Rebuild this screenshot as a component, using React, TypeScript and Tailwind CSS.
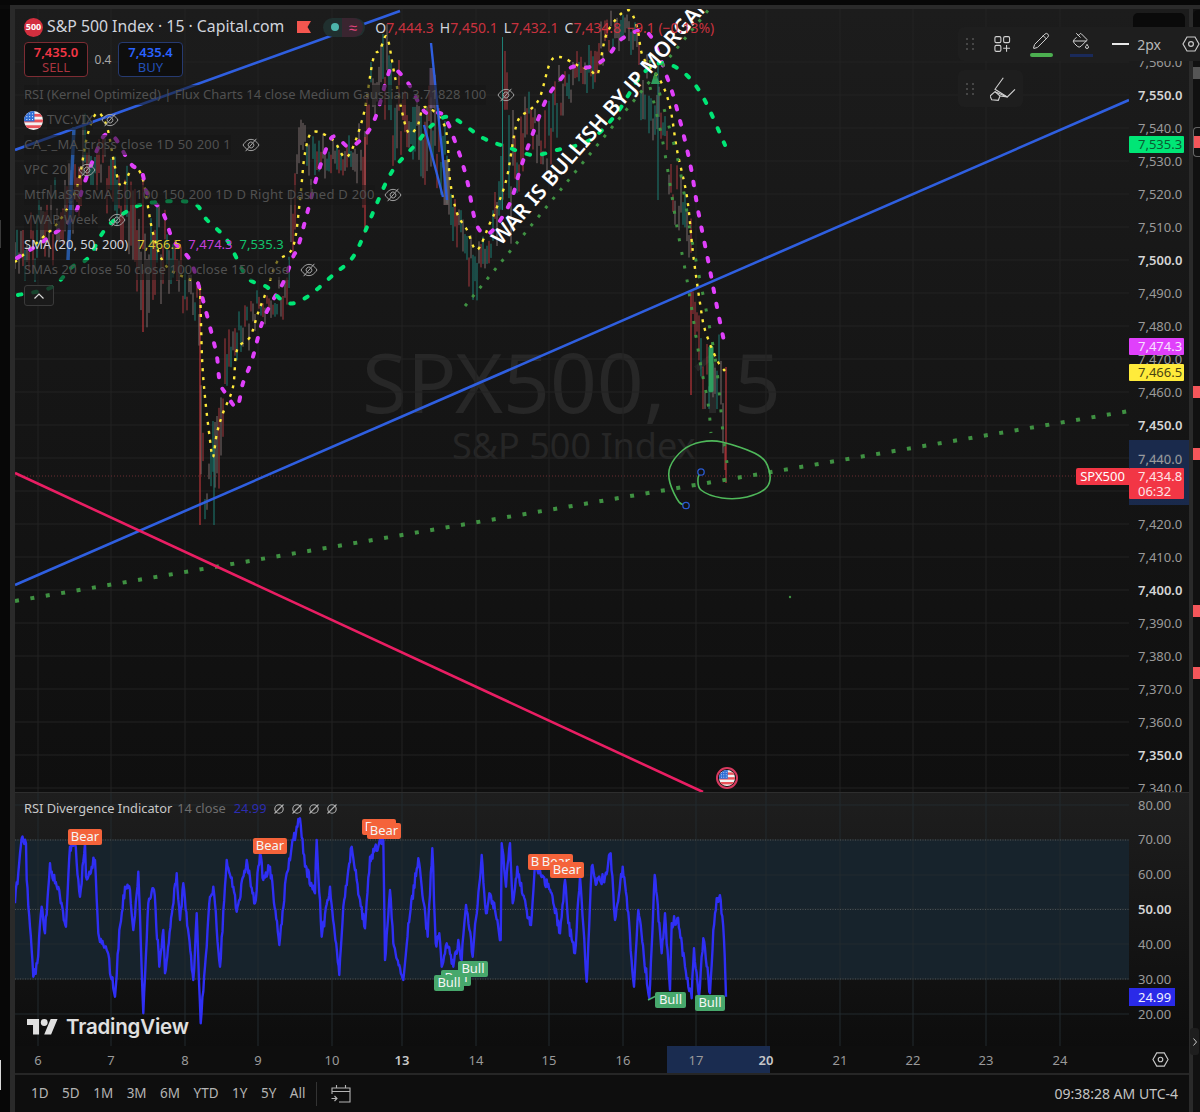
import React, { useId } from 'react';
import { PaintBucket, Pencil } from 'lucide-react';

type Pt = [number, number];

function rng(seed: number) {
  let s = seed;
  return () => {
    s = (s + 0x6d2b79f5) | 0;
    let t = Math.imul(s ^ (s >>> 15), 1 | s);
    t = (t + Math.imul(t ^ (t >>> 7), 61 | t)) ^ t;
    return ((t ^ (t >>> 14)) >>> 0) / 4294967296;
  };
}

function smooth(p: Pt[]) {
  let d = `M${p[0][0]} ${p[0][1]}`;
  for (let i = 0; i < p.length - 1; i++) {
    const a = p[i - 1] || p[i];
    const b = p[i];
    const c = p[i + 1];
    const e = p[i + 2] || c;
    const c1x = b[0] + (c[0] - a[0]) / 6;
    const c1y = b[1] + (c[1] - a[1]) / 6;
    const c2x = c[0] - (e[0] - b[0]) / 6;
    const c2y = c[1] - (e[1] - b[1]) / 6;
    d += `C${c1x.toFixed(1)} ${c1y.toFixed(1)} ${c2x.toFixed(1)} ${c2y.toFixed(1)} ${c[0]} ${c[1]}`;
  }
  return d;
}

// high / low of the candle cloud, read off the picture
const envelope: [number, number, number][] = [
  [15, 225, 290], [30, 210, 300], [40, 195, 285], [60, 170, 260], [85, 100, 210], [95, 110, 190], [110, 130, 220],
  [120, 150, 270], [130, 150, 280], [143, 170, 332], [150, 190, 325], [165, 200, 300], [175, 220, 312], [190, 270, 320],
  [198, 285, 330], [200, 285, 525], [205, 460, 527], [210, 440, 490], [215, 380, 522], [220, 350, 500], [225, 320, 410],
  [230, 300, 370], [240, 310, 360], [248, 300, 360], [252, 300, 340], [260, 280, 322], [265, 295, 330], [275, 290, 320],
  [285, 250, 322], [290, 180, 320], [300, 110, 180], [310, 125, 200], [320, 130, 190], [340, 140, 185], [355, 130, 172],
  [365, 100, 235], [370, 50, 130], [385, 9, 120], [395, 60, 180], [405, 60, 150], [420, 90, 210], [435, 60, 190],
  [445, 110, 205], [450, 150, 240], [455, 190, 270], [465, 220, 290], [475, 210, 305], [480, 240, 300], [490, 220, 262],
  [500, 120, 250], [503, 37, 200], [510, 70, 250], [520, 85, 190], [530, 90, 150], [540, 110, 170], [550, 95, 180],
  [560, 60, 120], [570, 50, 110], [580, 45, 90], [590, 40, 100], [600, 10, 70], [615, 9, 60], [630, 9, 50], [640, 30, 120],
  [650, 60, 140], [655, 80, 150], [665, 90, 140], [670, 140, 210], [680, 150, 240], [690, 200, 280], [695, 260, 350],
  [700, 300, 395], [705, 340, 420], [710, 340, 420], [715, 330, 400], [720, 330, 440], [725, 400, 482],
];

function buildCandles() {
  const r = rng(42);
  const red: string[] = [];
  const teal: string[] = [];
  const grey: string[] = [];
  let j = 0;
  for (let x = 15; x <= 725; x += 2) {
    while (j < envelope.length - 2 && envelope[j + 1][0] < x) j++;
    const a = envelope[j];
    const b = envelope[j + 1];
    const t = Math.min(1, (x - a[0]) / (b[0] - a[0]));
    const top = a[1] + (b[1] - a[1]) * t;
    const bot = a[2] + (b[2] - a[2]) * t;
    const span = bot - top;
    const len = span * (0.2 + r() * 0.35);
    const y1 = top + (span - len) * r();
    const seg = `M${x} ${y1.toFixed(1)}V${(y1 + len).toFixed(1)}`;
    const k = r();
    if (k < 0.36) red.push(seg);
    else if (k < 0.64) teal.push(seg);
    else grey.push(seg);
  }
  return { red: red.join(''), teal: teal.join(''), grey: grey.join('') };
}

const candles = buildCandles();

const sma20: Pt[] = [
  [15, 262], [40, 240], [60, 220], [77, 187], [87, 137], [97, 113], [107, 127], [115, 167], [122, 187], [133, 167], [143, 180],
  [153, 233], [167, 267], [198, 283], [200, 290], [202, 357], [205, 397], [210, 440], [213, 457], [217, 433], [223, 413],
  [233, 387], [237, 350], [250, 337], [258, 313], [267, 290], [277, 262], [293, 247], [300, 200], [305, 153], [313, 132],
  [333, 140], [347, 157], [363, 117], [373, 60], [380, 50], [387, 37], [395, 77], [407, 130], [417, 127], [425, 107],
  [445, 127], [450, 180], [457, 213], [467, 230], [477, 250], [490, 223], [497, 207], [507, 177], [517, 123], [530, 110],
  [540, 97], [550, 63], [560, 57], [577, 65], [590, 70], [598, 73], [607, 33], [627, 10], [637, 27], [643, 57], [660, 80],
  [670, 107], [677, 150], [687, 197], [693, 253], [700, 303], [705, 330], [717, 360], [725, 371],
];
const sma50: Pt[] = [
  [17, 258], [45, 240], [73, 217], [83, 187], [97, 150], [105, 135], [115, 138], [130, 163], [142, 173], [147, 193], [163, 213],
  [173, 240], [190, 260], [200, 290], [203, 300], [212, 335], [217, 357], [220, 383], [227, 395], [237, 407], [243, 383],
  [252, 360], [262, 323], [272, 302], [283, 283], [293, 257], [298, 247], [308, 210], [318, 173], [330, 140], [338, 138],
  [350, 147], [367, 133], [377, 113], [387, 78], [393, 68], [408, 83], [425, 112], [443, 115], [457, 147], [467, 180],
  [475, 220], [483, 233], [493, 230], [510, 203], [520, 170], [533, 133], [547, 98], [560, 80], [572, 67], [590, 67],
  [607, 57], [623, 38], [648, 33], [667, 77], [678, 113], [690, 163], [698, 210], [708, 260], [717, 307], [725, 346],
];
const sma200: Pt[] = [
  [18, 295], [52, 287], [72, 267], [88, 258], [107, 227], [133, 208], [157, 202], [193, 203], [207, 220], [227, 240], [247, 277],
  [267, 287], [287, 303], [307, 297], [333, 275], [353, 257], [367, 227], [377, 203], [393, 170], [417, 143], [430, 127],
  [450, 117], [483, 138], [507, 147], [533, 155], [557, 150], [590, 140], [617, 113], [640, 77], [660, 63], [683, 72],
  [703, 97], [725, 145],
];
const dropLeft: Pt[] = [[650, 87], [663, 143], [677, 227], [687, 280], [695, 330], [701, 367], [708, 403], [711, 433]];
const dropRight: Pt[] = [[650, 60], [670, 130], [680, 170], [690, 230], [700, 280], [712, 340], [718, 380], [723, 433], [727, 463], [729, 473]];
const circlePts: Pt[] = [
  [686, 505], [679, 502], [670, 483], [670, 467], [683, 450], [701, 442], [722, 442], [758, 455], [769, 470], [767, 487],
  [747, 497], [722, 498], [701, 490], [698, 478], [701, 472],
];

const rsiA: Pt[] = [
  [45, 370], [65, 175], [78, 190], [80, 300], [90, 440], [100, 590], [112, 550], [125, 380], [135, 460], [150, 250], [165, 310],
  [180, 350], [198, 440], [210, 200], [225, 190], [240, 350], [255, 190], [258, 290], [285, 240], [295, 460], [320, 510],
  [345, 650], [358, 450], [375, 320], [390, 330], [400, 450], [415, 275], [430, 700], [445, 370], [462, 330], [478, 560],
  [490, 450], [495, 580], [518, 380], [530, 280], [540, 420], [550, 310], [580, 600], [590, 400], [602, 730], [615, 560],
  [630, 350], [640, 320], [660, 560], [680, 240], [700, 320], [710, 395], [740, 240], [765, 370], [780, 220], [790, 300],
  [810, 260], [838, 495], [860, 280], [880, 180], [900, 115], [915, 260], [945, 340], [950, 180], [965, 470], [990, 320],
  [1018, 585], [1030, 380], [1055, 200], [1070, 300], [1095, 445], [1110, 230], [1135, 200], [1150, 180], [1155, 540],
  [1170, 330], [1180, 490], [1198, 555],
];
const rsiB: Pt[] = [
  [10, 600], [25, 430], [55, 235], [65, 320], [83, 470], [97, 205], [107, 490], [118, 460], [125, 560], [140, 490], [160, 560],
  [175, 480], [185, 540], [198, 375], [218, 530], [245, 225], [258, 400], [268, 340], [285, 390], [302, 480], [305, 190],
  [318, 320], [330, 190], [338, 370], [352, 260], [380, 390], [393, 435], [405, 250], [430, 290], [455, 340], [480, 460],
  [495, 300], [505, 430], [525, 520], [540, 290], [560, 605], [575, 260], [590, 310], [615, 290], [632, 220], [645, 420],
  [668, 260], [680, 350], [702, 620], [715, 390], [748, 655], [764, 285], [785, 520], [795, 400], [810, 630], [815, 430],
  [832, 415], [855, 560], [875, 655], [882, 505], [897, 650], [910, 475], [930, 640], [940, 450], [950, 355], [962, 360],
  [972, 480], [978, 650],
];

function buildRsi() {
  const r = rng(7);
  const pts: Pt[] = [
    ...rsiA.map(([x, y]): Pt => [x / 3, 780 + y / 3]),
    ...rsiB.map(([x, y]): Pt => [400 + x / 3, 780 + y / 3]),
  ];
  let d = `M${pts[0][0].toFixed(1)} ${pts[0][1].toFixed(1)}`;
  for (let i = 1; i < pts.length; i++) {
    const [x0, y0] = pts[i - 1];
    const [x1, y1] = pts[i];
    const n = Math.max(1, Math.round((x1 - x0) / 0.8));
    for (let k = 1; k <= n; k++) {
      const t = k / n;
      const jitter = k === n ? 0 : (r() - 0.5) * 11;
      d += `L${(x0 + (x1 - x0) * t).toFixed(1)} ${(y0 + (y1 - y0) * t + jitter).toFixed(1)}`;
    }
  }
  return d;
}

const rsiPath = buildRsi();

const dayX = [38, 111, 185, 258, 332, 402, 476, 549, 623, 696, 766, 840, 913, 986, 1060];
const priceY = Array.from({ length: 23 }, (_, i) => 62 + i * 33);
const rsiY = [805, 840, 875, 909, 944, 979, 1014];

const prices = [
  '7,560.0', '7,550.0', '7,540.0', '7,530.0', '7,520.0', '7,510.0', '7,500.0', '7,490.0', '7,480.0', '7,470.0', '7,460.0', '7,450.0',
  '7,440.0', '7,430.0', '7,420.0', '7,410.0', '7,400.0', '7,390.0', '7,380.0', '7,370.0', '7,360.0', '7,350.0', '7,340.0',
];
const boldPrices = ['7,550.0', '7,500.0', '7,450.0', '7,400.0', '7,350.0'];

const days = [
  { t: '6', w: 'w-[73px]' }, { t: '7', w: 'w-[74px]' }, { t: '8', w: 'w-[73px]' }, { t: '9', w: 'w-[74px]' }, { t: '10', w: 'w-[70px]' },
  { t: '13', w: 'w-[74px]', b: true }, { t: '14', w: 'w-[73px]' }, { t: '15', w: 'w-[74px]' }, { t: '16', w: 'w-[73px]' }, { t: '17', w: 'w-[70px]' },
  { t: '20', w: 'w-[74px]', b: true }, { t: '21', w: 'w-[73px]' }, { t: '22', w: 'w-[73px]' }, { t: '23', w: 'w-[74px]' }, { t: '24', w: 'w-[40px]' },
];

function EyeOff({ className }: { className?: string }) {
  return (
    <svg viewBox="0 0 18 14" className={`w-[18px] h-[14px] shrink-0 ${className || ''}`} fill="none" stroke="#a8a8a8" strokeWidth="1">
      <path d="M1 7C4 2.6 6.5 1.4 9 1.4S14 2.6 17 7C14 11.4 11.5 12.6 9 12.6S4 11.4 1 7Z" />
      <path d="M6.6 8.6A3 3 0 0 1 10.6 4.4M11.4 5.4A3 3 0 0 1 7.4 9.6" />
      <path d="M3.6 13.2 14.4 0.8" />
    </svg>
  );
}

function UsFlag({ size }: { size: string }) {
  const id = useId();
  return (
    <svg viewBox="0 0 20 20" className={`${size} shrink-0`}>
      <clipPath id={id}>
        <circle cx="10" cy="10" r="10" />
      </clipPath>
      <g clipPath={`url(#${id})`}>
        <rect width="20" height="20" fill="#f2f2f2" />
        <rect y="3" width="20" height="3" fill="#e8535a" />
        <rect y="9" width="20" height="3" fill="#e8535a" />
        <rect y="15" width="20" height="3" fill="#e8535a" />
        <rect width="11" height="11" fill="#2f6fd6" />
        <path d="M2.5 3h1M5.5 3h1M8.5 3h1M2.5 6h1M5.5 6h1M8.5 6h1M2.5 9h1M5.5 9h1M8.5 9h1" stroke="#fff" strokeWidth="1" />
      </g>
    </svg>
  );
}

function DragDots() {
  return (
    <div className="grid grid-cols-2 gap-x-[4px] gap-y-[3px]">
      {[0, 1, 2, 3, 4, 5].map((i) => (
        <span key={i} className="w-[2px] h-[2px] rounded-full bg-[#555555]" />
      ))}
    </div>
  );
}

function LegendRow({ text, eye, flag, spacing }: { text: string; eye: string; flag?: boolean; spacing?: string }) {
  return (
    <div className="flex items-center h-[25px]">
      {flag && <UsFlag size="w-[19px] h-[19px] mr-[4px]" />}
      <span className={`bg-[#161616]/55 text-[#505050] whitespace-nowrap ${spacing || ''}`}>{text}</span>
      <EyeOff className={eye} />
    </div>
  );
}

function Tag({ className, children }: { className: string; children: React.ReactNode }) {
  return <div className={`absolute left-0 w-[55px] pl-[9px] rounded-[1px] ${className}`}>{children}</div>;
}

function MainChart() {
  return (
    <svg viewBox="15 9 1114 783" className="block w-full h-full">
      <g stroke="#222222" strokeWidth="1">
        {dayX.map((x) => (
          <line key={x} x1={x} x2={x} y1="9" y2="792" />
        ))}
        {priceY.map((y) => (
          <line key={y} x1="15" x2="1129" y1={y} y2={y} />
        ))}
      </g>
      <path d={candles.teal} stroke="#1d7f74" strokeWidth="1" fill="none" />
      <path d={candles.grey} stroke="#7a6d6d" strokeWidth="1" fill="none" />
      <path d={candles.red} stroke="#a8383e" strokeWidth="1" fill="none" />
      <path d="M200 285V525M365 137V233M143 270V332M691 290V395M726 367V483" stroke="#d93a40" strokeWidth="1" fill="none" />
      <path d="M502.5 37V210M214 445V525M658 60V200" stroke="#1d7f74" strokeWidth="1" fill="none" />
      <path d="M711 348V390" stroke="#2f9f5f" strokeWidth="5" strokeLinecap="round" fill="none" />
      <path d="M432 68V108" stroke="#7d6390" strokeWidth="5" opacity="0.6" fill="none" />
      <path d="M446 160V205" stroke="#7a6a6a" strokeWidth="5" opacity="0.7" fill="none" />
      <path d="M655 72 660 84H651Z" fill="#2f9f5f" />

      <line x1="15" y1="476" x2="1076" y2="476" stroke="#6b2d30" strokeWidth="1" strokeDasharray="1 2" />

      <path d={smooth(sma20)} stroke="#ffeb3b" strokeWidth="2.4" strokeDasharray="3 6" fill="none" />
      <path d={smooth(sma50)} stroke="#e040fb" strokeWidth="4" strokeDasharray="3.5 12" strokeLinecap="round" fill="none" />
      <path d={smooth(sma200)} stroke="#00e676" strokeWidth="4" strokeDasharray="3.5 12" strokeLinecap="round" fill="none" />

      <line x1="465" y1="306" x2="715" y2="2" stroke="#3f9142" strokeWidth="3" strokeDasharray="3 8.5" />
      <path d={smooth(dropLeft)} stroke="#3f9142" strokeWidth="3" strokeDasharray="3 11" fill="none" />
      <path d={smooth(dropRight)} stroke="#3f9142" strokeWidth="3" strokeDasharray="3 14" fill="none" />
      <line x1="15" y1="601" x2="1129" y2="411" stroke="#3f9142" strokeWidth="4" strokeDasharray="4 11.6" />

      <line x1="15" y1="585" x2="1129" y2="100" stroke="#2f5fe0" strokeWidth="2.6" />
      <line x1="15" y1="150" x2="400" y2="11" stroke="#2f5fe0" strokeWidth="2.6" />
      <line x1="431" y1="43" x2="447" y2="200" stroke="#2f5fe0" strokeWidth="2.4" />
      <line x1="424" y1="125" x2="443" y2="197" stroke="#2f5fe0" strokeWidth="2.4" />
      <path d="M74 127 68 260" stroke="#2a62b8" strokeWidth="3.5" opacity="0.85" />
      <line x1="15" y1="473" x2="703" y2="792" stroke="#e91e63" strokeWidth="2.6" />

      <path d={smooth(circlePts)} stroke="#4fb85a" strokeWidth="1.6" fill="none" />
      <circle cx="686" cy="505.5" r="3.2" stroke="#2a5ad0" strokeWidth="1.3" fill="#111111" />
      <circle cx="701" cy="472" r="3.2" stroke="#2a5ad0" strokeWidth="1.3" fill="#111111" />
      <circle cx="790" cy="597" r="1.2" fill="#3f9142" />
    </svg>
  );
}

function RsiChart() {
  return (
    <svg viewBox="15 793 1114 253" className="block w-full h-full">
      <rect x="15" y="840" width="1114" height="139" fill="#17232c" />
      <g stroke="#232a2f" strokeWidth="1">
        {dayX.map((x) => (
          <line key={x} x1={x} x2={x} y1="793" y2="1046" />
        ))}
        {rsiY.map((y) => (
          <line key={y} x1="15" x2="1129" y1={y} y2={y} />
        ))}
      </g>
      <g stroke="#4a5257" strokeWidth="1" strokeDasharray="1 1.5">
        <line x1="15" x2="1129" y1="840" y2="840" />
        <line x1="15" x2="1129" y1="909.5" y2="909.5" />
        <line x1="15" x2="1129" y1="979" y2="979" />
      </g>
      <path d={rsiPath} stroke="#2f2ff5" strokeWidth="2.4" strokeLinejoin="round" fill="none" />
      <path d="M648 1000 656 996" stroke="#4caf72" strokeWidth="1.4" />
    </svg>
  );
}

function Label({ className, children }: { className: string; children: React.ReactNode }) {
  return (
    <div className={`absolute h-[15.5px] rounded-[2px] flex items-center justify-center text-[13px] leading-none text-[#f5f5f5] ${className}`}>
      {children}
    </div>
  );
}

function NoValue() {
  return (
    <svg viewBox="0 0 12 12" className="w-[12px] h-[12px]" fill="none" stroke="#b0b0b0" strokeWidth="1.1">
      <circle cx="6" cy="6" r="4.2" />
      <path d="M1.5 10.5 10.5 1.5" />
    </svg>
  );
}

export default function App() {
  return (
    <div className="relative w-[1200px] h-[1112px] overflow-hidden bg-[#0a0a0a] text-[13px] font-['Noto_Sans','Liberation_Sans',sans-serif]">
      <div className="h-[5px] bg-[#070707]" />
      <div className="h-[4px] ml-[10px] mr-0 bg-[#2a2a2a]" />
      <div className="flex h-[1103px]">
        <div className="w-[10px] bg-[#070707] flex flex-col">
          <div className="h-[211px]" />
          <div className="w-[1px] h-[28px] bg-[#3a3a3a]" />
          <div className="h-[812px]" />
          <div className="w-[1px] h-[30px] bg-[#d8d8d8]" />
        </div>
        <div className="w-[5px] bg-[#2a2a2a]" />

        <div className="w-[1174px] flex flex-col">
          {/* main pane */}
          <div className="flex h-[783px] bg-linear-to-b from-[#1c1c1c] to-[#0f0f0f]">
            <div className="relative w-[1114px] h-full overflow-hidden">
              <div className="absolute left-[347px] top-[327px] text-[82px] leading-[90px] text-[#272727] whitespace-nowrap">SPX500, 15</div>
              <div className="absolute left-[437px] top-[415px] text-[36px] leading-[44px] text-[#262626] whitespace-nowrap">S&amp;P 500 Index</div>
              <div className="absolute inset-0">
                <MainChart />
              </div>

              <div className="absolute left-[480px] top-[218px] origin-left -rotate-[49deg] text-[21px] leading-[28px] font-semibold text-white whitespace-nowrap">
                WAR IS BULLISH BY JP MORGAN
              </div>

              <div className="absolute left-[9px] top-[8px] flex flex-col">
                <div className="flex items-center h-[20px]">
                  <div className="w-[19px] h-[19px] rounded-full bg-[#d32f3f] flex items-center justify-center text-[9px] font-bold text-white">500</div>
                  <span className="ml-[4px] text-[15.8px] text-[#d1d4dc] whitespace-nowrap">S&amp;P 500 Index · 15 · Capital.com</span>
                  <svg viewBox="0 0 14 12" className="ml-[13px] w-[14px] h-[12px]">
                    <path d="M0 0H14L10.5 6 14 12H0Z" fill="#f4564f" />
                  </svg>
                  <div className="ml-[12px] w-[42px] h-[19px] rounded-full bg-[#20302f] flex items-center">
                    <span className="ml-[8px] w-[8px] h-[8px] rounded-full bg-[#4db6ac]" />
                    <span className="ml-[3px] w-[21px] h-[19px] rounded-r-full bg-[#3a2530] text-[#e5457e] text-[15px] leading-[19px] text-center">≈</span>
                  </div>
                  <span className="ml-[10px] text-[14px] text-[#d1d4dc] whitespace-nowrap">
                    O<span className="text-[#c9323f]">7,444.3</span>
                    <span className="ml-[6px]">H</span><span className="text-[#c9323f]">7,450.1</span>
                    <span className="ml-[6px]">L</span><span className="text-[#c9323f]">7,432.1</span>
                    <span className="ml-[6px]">C</span><span className="text-[#c9323f]">7,434.8</span>
                    <span className="ml-[6px] text-[#c9323f]">−9.1 (−0.13%)</span>
                  </span>
                </div>
                <div className="flex items-center mt-[5px] h-[35px]">
                  <div className="w-[64px] h-full rounded-[4px] border border-[#7d2c33] bg-[#0e0e0e] flex flex-col items-center justify-center leading-[15px]">
                    <span className="font-semibold text-[#f23645]">7,435.0</span>
                    <span className="text-[#a9343e]">SELL</span>
                  </div>
                  <span className="w-[30px] text-center text-[12px] text-[#a8a8a8]">0.4</span>
                  <div className="w-[65px] h-full rounded-[4px] border border-[#263a70] bg-[#0e0e0e] flex flex-col items-center justify-center leading-[15px]">
                    <span className="font-semibold text-[#2962ff]">7,435.4</span>
                    <span className="text-[#2350b8]">BUY</span>
                  </div>
                </div>
                <div className="flex flex-col mt-[5.5px]">
                  <LegendRow text="RSI (Kernel Optimized) | Flux Charts 14 close Medium Gaussian 3.71828 100" eye="ml-[11px]" />
                  <LegendRow text="TVC:VIX" eye="ml-[8px]" flag />
                  <LegendRow text="CA_-_MA_cross close 1D 50 200 1" eye="ml-[11px]" spacing="tracking-[0.25px]" />
                  <LegendRow text="VPC 20" eye="ml-[11px]" spacing="tracking-[0.2px]" />
                  <LegendRow text="MtfMaSR SMA 50 100 150 200 1D D Right Dashed D 200" eye="ml-[9px]" spacing="tracking-[0.25px]" />
                  <LegendRow text="VWAP Week" eye="ml-[10px]" spacing="tracking-[0.2px]" />
                  <div className="flex items-center h-[25px] whitespace-nowrap">
                    <span className="text-[#d1d4dc]">SMA (20, 50, 200)</span>
                    <span className="ml-[9px] text-[#d9c836]">7,466.5</span>
                    <span className="ml-[7px] text-[#c53fdc]">7,474.3</span>
                    <span className="ml-[7px] text-[#12c46c]">7,535.3</span>
                  </div>
                  <LegendRow text="SMAs 20 close 50 close 100 close 150 close" eye="ml-[11px]" spacing="tracking-[0.15px]" />
                </div>
                <div className="mt-[2.5px] w-[30px] h-[21px] rounded-[3px] border border-[#3a3a3a] bg-[#1c1c1c]/80 flex items-center justify-center">
                  <svg viewBox="0 0 10 6" className="w-[10px] h-[6px]" fill="none" stroke="#d8d8d8" strokeWidth="1.2">
                    <path d="M0.5 5.5 5 1l4.5 4.5" />
                  </svg>
                </div>
              </div>

              <div className="absolute left-[1061px] top-[459px] w-[53px] h-[17px] rounded-l-[2px] bg-[#f23645] text-[13px] leading-[17px] text-white text-center">SPX500</div>
              <div className="absolute left-[701px] top-[758px]">
                <div className="w-[22px] h-[22px] rounded-full border-2 border-[#d8395f] bg-[#111111] flex items-center justify-center">
                  <UsFlag size="w-[16px] h-[16px]" />
                </div>
              </div>
            </div>

            <div className="relative w-[60px] h-full overflow-hidden">
              <div className="flex flex-col pt-[36.5px]">
                {prices.map((p) => (
                  <div
                    key={p}
                    className={`h-[33px] pl-[9px] leading-[33px] ${boldPrices.includes(p) ? 'font-semibold text-[#d4d4d4]' : 'text-[#9a9a9a]'}`}
                  >
                    {p === '7,430.0' ? '' : p}
                  </div>
                ))}
              </div>
              <Tag className="top-[127px] h-[17px] leading-[17px] bg-[#00e676] text-[#0b5a32]">7,535.3</Tag>
              <Tag className="top-[329px] h-[17px] leading-[17px] bg-[#e040fb] text-[#f8e0ff]">7,474.3</Tag>
              <Tag className="top-[355px] h-[17px] leading-[17px] bg-[#ffeb3b] text-[#4a4410]">7,466.5</Tag>
              <div className="absolute left-0 top-[431px] w-[60px] h-[65px] bg-[#1c2f5a]/80 pt-[11px] pl-[9px] text-[#9a9a9a] leading-[16px]">7,440.0</div>
              <div className="absolute left-0 top-[459px] w-[55px] h-[31px] pl-[9px] rounded-[1px] bg-[#f23645] text-[#ffe3e5] leading-[15px] pt-[1px]">
                <div>7,434.8</div>
                <div>06:32</div>
              </div>
            </div>
          </div>

          <div className="h-[1px] bg-[#2e2e2e]" />

          {/* rsi pane */}
          <div className="flex h-[253px] bg-linear-to-b from-[#1e1e1e] to-[#0d0d0d]">
            <div className="relative w-[1114px] h-full overflow-hidden">
              <div className="absolute inset-0">
                <RsiChart />
              </div>
              <div className="absolute left-[9px] top-[7px] h-[18px] flex items-center whitespace-nowrap text-[12.8px]">
                <span className="text-[#c8c8c8]">RSI Divergence Indicator</span>
                <span className="ml-[5px] text-[#6d6d6d]">14 close</span>
                <span className="ml-[8px] text-[#2c2cb0]">24.99</span>
                <div className="ml-[7px] flex gap-[5.5px]">
                  <NoValue />
                  <NoValue />
                  <NoValue />
                  <NoValue />
                </div>
              </div>

              <Label className="left-[53px] top-[36px] w-[34px] bg-[#f4633a]">Bear</Label>
              <Label className="left-[238px] top-[45px] w-[34px] bg-[#f4633a]">Bear</Label>
              <Label className="left-[347px] top-[26px] w-[34px] bg-[#f4633a]">Bear</Label>
              <Label className="left-[352px] top-[30px] w-[34px] bg-[#f4633a]">Bear</Label>
              <Label className="left-[513px] top-[61px] w-[34px] bg-[#f4633a]">Bear</Label>
              <Label className="left-[524px] top-[61px] w-[34px] bg-[#f4633a]">Bear</Label>
              <Label className="left-[535px] top-[69px] w-[34px] bg-[#f4633a]">Bear</Label>
              <Label className="left-[426px] top-[177px] w-[30px] bg-[#47a86c]">Bull</Label>
              <Label className="left-[419px] top-[182px] w-[30px] bg-[#47a86c]">Bull</Label>
              <Label className="left-[443px] top-[168px] w-[30px] bg-[#47a86c]">Bull</Label>
              <Label className="left-[640px] top-[199px] w-[31px] bg-[#47a86c]">Bull</Label>
              <Label className="left-[680px] top-[202px] w-[30px] bg-[#47a86c]">Bull</Label>

              <div className="absolute left-[12px] top-[221px] flex items-center gap-[8px]">
                <svg viewBox="0 4 36 18" className="w-[31px] h-[15.5px]" fill="#e0e0e0">
                  <path d="M14 22H7V11H0V4h14v18zM28 22h-8l7.5-18h8L28 22z" />
                  <circle cx="20" cy="8" r="4" />
                </svg>
                <span className="text-[20.5px] leading-[26px] font-semibold tracking-[-0.2px] text-[#e0e0e0] font-['Inter','Liberation_Sans',sans-serif]">TradingView</span>
              </div>
            </div>

            <div className="relative w-[60px] h-full overflow-hidden">
              <div className="flex flex-col -mt-[5.4px]">
                {['80.00', '70.00', '60.00', '50.00', '40.00', '30.00', '20.00'].map((v) => (
                  <div key={v} className={`h-[34.83px] pl-[9px] leading-[34.83px] ${v === '50.00' ? 'font-semibold text-[#d4d4d4]' : 'text-[#9a9a9a]'}`}>
                    {v}
                  </div>
                ))}
              </div>
              <div className="absolute left-0 top-[195px] w-[46px] h-[18px] pl-[9px] leading-[18px] bg-[#2a2ae8] text-[#f0f0ff]">24.99</div>
            </div>
          </div>

          {/* time axis */}
          <div className="flex h-[27px] bg-[#0e0e0e]">
            <div className="relative w-[1114px] flex pl-[23px] items-center">
              <div className="absolute left-[652px] top-0 w-[103px] h-[27px] bg-[#1a2c50]" />
              {days.map((d) => (
                <div key={d.t} className={`relative ${d.w} h-[27px] leading-[29px]`}>
                  <span className={`absolute left-0 -translate-x-1/2 ${d.b ? 'font-semibold text-[#c8c8c8]' : 'text-[#9a9a9a]'}`}>{d.t}</span>
                </div>
              ))}
            </div>
            <div className="w-[60px] flex items-center justify-center pl-[2px]">
              <svg viewBox="0 0 18 18" className="w-[17px] h-[17px]" fill="none" stroke="#c8c8c8" strokeWidth="1.2">
                <path d="M5 2H13L17 9 13 16H5L1 9Z" />
                <circle cx="9" cy="9" r="2.4" />
              </svg>
            </div>
          </div>

          <div className="h-[2px] bg-[#262626]" />

          {/* bottom bar */}
          <div className="flex items-center h-[37px] bg-[#0e0e0e] pl-[16px] text-[13.5px] text-[#b4b4b4]">
            <div className="flex items-center gap-[13.5px]">
              <span>1D</span>
              <span>5D</span>
              <span>1M</span>
              <span>3M</span>
              <span>6M</span>
              <span>YTD</span>
              <span>1Y</span>
              <span>5Y</span>
              <span>All</span>
            </div>
            <div className="ml-[11px] w-[1px] h-[24px] bg-[#333333]" />
            <svg viewBox="0 0 20 19" className="ml-[14px] w-[20px] h-[19px]" fill="none" stroke="#b4b4b4" strokeWidth="1.1">
              <path d="M1 10V4H19V18H8M1 7.5H19M5.5 1V4.5M14.5 1V4.5" />
              <path d="M0.5 14.5H6M3.5 12 6 14.5 3.5 17" />
            </svg>
            <span className="ml-auto mr-[11px] text-[14px] text-[#c4c4c4] whitespace-nowrap">09:38:28 AM UTC-4</span>
          </div>
        </div>

        <div className="w-[4px] bg-[#2a2a2a]" />
        <div className="w-[7px] bg-[#111111] flex flex-col">
          <div className="h-[58px]" />
          <div className="h-[12px] bg-[#555555]" />
          <div className="h-[48px]" />
          <div className="h-[30px] border border-r-0 border-[#666666] rounded-l-[4px] flex items-center">
            <div className="w-full h-[12px] bg-[#f4565a]" />
          </div>
          <div className="h-[229px]" />
          <div className="h-[12px] bg-[#f4565a]" />
          <div className="h-[50px]" />
          <div className="h-[12px] bg-[#f4565a]" />
          <div className="h-[145px]" />
          <div className="h-[12px] bg-[#f4565a]" />
          <div className="h-[50px]" />
          <div className="h-[12px] bg-[#f4565a]" />
        </div>
      </div>

      {/* floating drawing toolbars */}
      <div className="absolute left-[958px] top-[27px] w-[242px] h-[34px] rounded-l-[6px] bg-[#1e1e1e] flex items-center pl-[8px] overflow-hidden">
        <DragDots />
        <svg viewBox="0 0 18 18" className="ml-[21px] w-[18px] h-[18px]" fill="none" stroke="#d0d0d0" strokeWidth="1.2">
          <rect x="1" y="1" width="6.5" height="6.5" rx="1.5" />
          <rect x="10.5" y="1" width="6.5" height="6.5" rx="1.5" />
          <rect x="1" y="10.5" width="6.5" height="6.5" rx="1.5" />
          <path d="M13.7 10v7.5M10 13.7h7.5" />
        </svg>
        <div className="ml-[19px] flex flex-col items-center w-[24px]">
          <Pencil className="w-[18px] h-[18px] text-[#d8d8d8]" strokeWidth={1.3} />
          <div className="mt-[3px] w-[23px] h-[4px] rounded-full bg-[#4caf50]" />
        </div>
        <div className="ml-[17px] flex flex-col items-center w-[24px]">
          <PaintBucket className="w-[18px] h-[18px] text-[#d8d8d8]" strokeWidth={1.3} />
          <div className="mt-[4px] w-[23px] h-[3px] bg-[#1a2a5a]" />
        </div>
        <div className="ml-[19px] w-[19px] h-[2px] bg-[#e8e8e8]" />
        <span className="ml-[8px] text-[14px] text-[#b8b8b8]">2px</span>
        <svg viewBox="0 0 18 18" className="ml-[21px] w-[18px] h-[18px] shrink-0" fill="none" stroke="#c8c8c8" strokeWidth="1.2">
          <path d="M5 2H13L17 9 13 16H5L1 9Z" />
          <circle cx="9" cy="9" r="2.4" />
        </svg>
      </div>
      <div className="absolute left-[958px] top-[70px] w-[65px] h-[37px] rounded-[6px] bg-[#1e1e1e] flex items-center pl-[8px]">
        <DragDots />
        <svg viewBox="0 0 26 24" className="ml-[16px] w-[26px] h-[24px]" fill="none" stroke="#d0d0d0" strokeWidth="1.1">
          <path d="M13.3 0.7 5 12.3 17.3 20 25 12.3" />
          <path d="M5 14.7 0 19 1.7 22.7 8.3 23.3 10 19Z" />
          <path d="M5 14.7 17.3 20 10 19" />
        </svg>
      </div>
      <div className="absolute left-[1133px] top-[13px] w-[52px] h-[14px] rounded-t-[5px] bg-[#0a0a0a]" />
      <div className="absolute left-[1193px] top-[10px] w-[7px] h-[17px] rounded-tl-[5px] bg-[#0a0a0a]" />
      <div className="absolute left-[1190px] top-[1028px] w-[9px] h-[27px] rounded-[3px] bg-[#1e1e1e] flex items-center justify-center">
        <svg viewBox="0 0 4 8" className="w-[4px] h-[8px]" fill="none" stroke="#c8c8c8" strokeWidth="1">
          <path d="M0.5 0.5 3.5 4 0.5 7.5" />
        </svg>
      </div>
    </div>
  );
}
